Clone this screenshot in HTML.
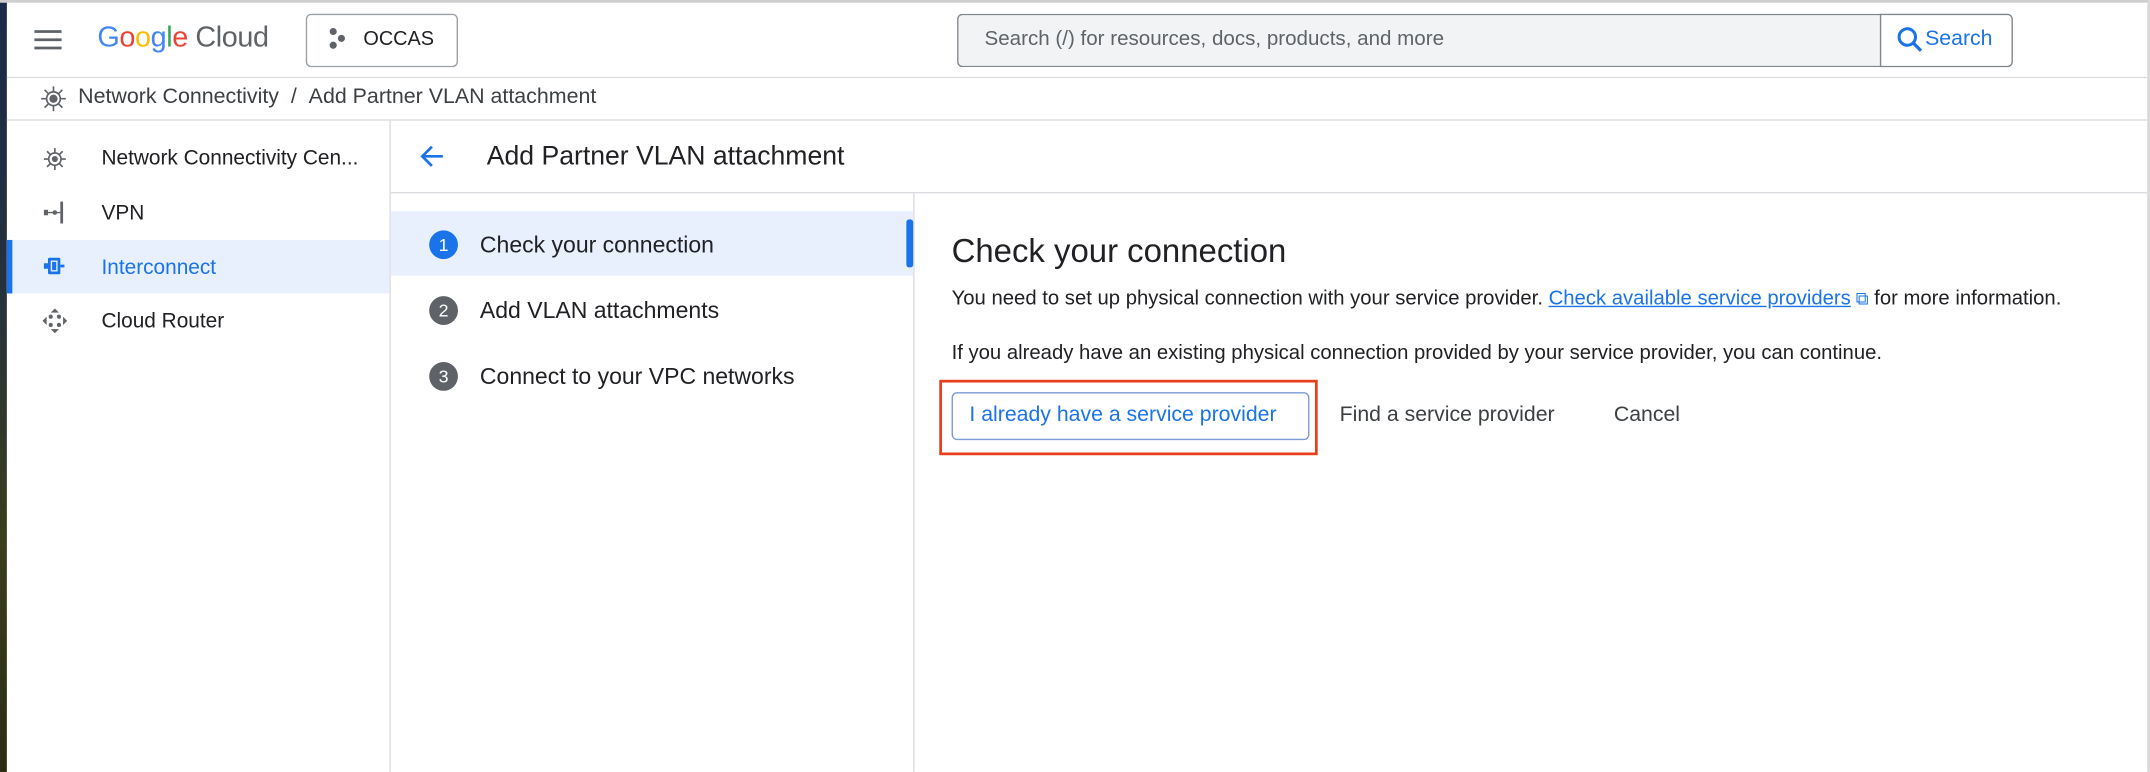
<!DOCTYPE html>
<html><head><meta charset="utf-8"><style>
html,body{margin:0;padding:0;width:2150px;height:772px;overflow:hidden;background:#fff}
#w{position:absolute;left:0;top:0;width:1568px;height:563px;transform:scale(1.37117);transform-origin:0 0;font-family:"Liberation Sans",Arial,sans-serif;color:#202124}
.a{position:absolute}
.t{position:absolute;white-space:nowrap}
</style></head><body><div id="w">
<div class="a" style="left:0;top:0;width:5px;height:563px;background:linear-gradient(#1a2a4a,#27323a 40%,#3a3e1c 70%,#2a2c14)"></div>
<div class="a" style="left:0;top:0;width:1568px;height:2px;background:#cfcfcf"></div>
<div class="a" style="left:1566px;top:0;width:2px;height:563px;background:#d8d8d8"></div>
<!-- header -->
<svg class="a" style="left:25px;top:21px" width="20" height="16"><rect y="1" width="20" height="2" fill="#5f6368"/><rect y="7" width="20" height="2" fill="#5f6368"/><rect y="13" width="20" height="2" fill="#5f6368"/></svg>
<div class="t" style="left:71px;top:16px;font-size:21px;letter-spacing:-0.3px"><span style="color:#4285f4">G</span><span style="color:#ea4335">o</span><span style="color:#fbbc04">o</span><span style="color:#4285f4">g</span><span style="color:#34a853">l</span><span style="color:#ea4335">e</span><span style="color:#5f6368"> Cloud</span></div>
<div class="a" style="left:223px;top:10px;width:109px;height:37px;border:1px solid #9aa0a6;border-radius:4px"></div>
<svg class="a" style="left:239px;top:20px" width="14" height="16"><circle cx="4" cy="3" r="2.6" fill="#5f6368"/><circle cx="10" cy="8" r="2.6" fill="#5f6368"/><circle cx="4" cy="13" r="2.6" fill="#5f6368"/></svg>
<div class="t" style="left:265px;top:21px;font-size:14.5px;color:#202124">OCCAS</div>
<div class="a" style="left:698px;top:10px;width:673px;height:37px;background:#f1f3f4;border:1px solid #80868b;border-right:none;border-radius:4px 0 0 4px"></div>
<div class="a" style="left:1371px;top:10px;width:95px;height:37px;border:1px solid #80868b;border-radius:0 4px 4px 0;background:#fff"></div>
<div class="t" style="left:718px;top:20px;font-size:15px;color:#5f6368">Search (/) for resources, docs, products, and more</div>
<svg class="a" style="left:1383px;top:19px" width="20" height="20"><circle cx="8" cy="8" r="6" fill="none" stroke="#1a73e8" stroke-width="2.2"/><path d="M12.5 12.5 L18 18" stroke="#1a73e8" stroke-width="2.4"/></svg>
<div class="t" style="left:1404px;top:20px;font-size:15.5px;color:#1a73e8">Search</div>
<div class="a" style="left:5px;top:56px;width:1563px;height:1px;background:#dadce0"></div>
<!-- breadcrumb -->
<svg class="a" style="left:29px;top:62px" width="20" height="20"><g stroke="#5f6368" stroke-width="1.2" fill="none"><circle cx="10" cy="10" r="5"/><path d="M10 1v4M10 15v4M1 10h4M15 10h4M3.5 3.5l3 3M13.5 13.5l3 3M16.5 3.5l-3 3M3.5 16.5l3-3"/></g><circle cx="10" cy="10" r="3" fill="#5f6368"/></svg>
<div class="t" style="left:57px;top:62px;font-size:15.6px;color:#3c4043">Network Connectivity&nbsp;&nbsp;/&nbsp;&nbsp;Add Partner VLAN attachment</div>
<div class="a" style="left:5px;top:87px;width:1563px;height:1px;background:#dadce0"></div>
<!-- sidebar -->
<div class="a" style="left:284px;top:88px;width:1px;height:475px;background:#dadce0"></div>
<svg class="a" style="left:31px;top:107px" width="18" height="18"><g stroke="#5f6368" stroke-width="1.2" fill="none"><circle cx="9" cy="9" r="4.5"/><path d="M9 1v3.5M9 13.5v3.5M1 9h3.5M13.5 9h3.5M3.3 3.3l2.5 2.5M12.2 12.2l2.5 2.5M14.7 3.3l-2.5 2.5M3.3 14.7l2.5-2.5"/></g><circle cx="9" cy="9" r="2.2" fill="#5f6368"/></svg>
<div class="t" style="left:74px;top:107px;font-size:15.2px">Network Connectivity Cen...</div>
<svg class="a" style="left:31px;top:146px" width="18" height="18"><g fill="#5f6368"><rect x="1" y="7" width="3" height="4"/><rect x="13" y="1" width="2" height="16"/><path d="M4 8.5h9v1H4z"/><circle cx="9" cy="9" r="1.7"/></g></svg>
<div class="t" style="left:74px;top:147px;font-size:15.2px">VPN</div>
<div class="a" style="left:5px;top:175px;width:279px;height:39px;background:#e8f0fe"></div>
<div class="a" style="left:5px;top:175px;width:4px;height:39px;background:#1a73e8"></div>
<svg class="a" style="left:31px;top:185px" width="18" height="18"><g fill="#1a73e8"><rect x="4" y="3" width="9" height="12" rx="1"/><rect x="1" y="7" width="3" height="4"/><rect x="13" y="8" width="3" height="2"/></g><rect x="6" y="5" width="5" height="8" fill="#e8f0fe"/><rect x="7" y="6" width="3" height="6" fill="#1a73e8"/></svg>
<div class="t" style="left:74px;top:187px;font-size:15.2px;color:#1a73e8">Interconnect</div>
<svg class="a" style="left:31px;top:225px" width="18" height="18"><g fill="#5f6368"><path d="M9 0l3 3H6zM9 18l3-3H6zM0 9l3-3v6zM18 9l-3-3v6z"/><circle cx="6" cy="6" r="1.5"/><circle cx="12" cy="12" r="1.5"/><circle cx="12" cy="6" r="1.5"/><circle cx="6" cy="12" r="1.5"/></g></svg>
<div class="t" style="left:74px;top:226px;font-size:15.2px">Cloud Router</div>
<!-- title row -->
<svg class="a" style="left:305px;top:104px" width="20" height="20"><path d="M18 10H3M10 3L3 10l7 7" stroke="#1a73e8" stroke-width="2" fill="none"/></svg>
<div class="t" style="left:355px;top:103px;font-size:19.4px">Add Partner VLAN attachment</div>
<div class="a" style="left:285px;top:140px;width:1281px;height:1px;background:#dadce0"></div>
<!-- steps -->
<div class="a" style="left:666px;top:141px;width:1px;height:422px;background:#dadce0"></div>
<div class="a" style="left:285px;top:154px;width:381px;height:47px;background:#e8f0fe"></div>
<div class="a" style="left:661px;top:160px;width:5px;height:35px;background:#1a73e8;border-radius:2px"></div>
<div class="a" style="left:313px;top:168px;width:21px;height:21px;border-radius:50%;background:#1a73e8;color:#fff;font-size:13px;text-align:center;line-height:21px">1</div>
<div class="t" style="left:350px;top:169px;font-size:16.8px">Check your connection</div>
<div class="a" style="left:313px;top:216px;width:21px;height:21px;border-radius:50%;background:#5f6368;color:#fff;font-size:13px;text-align:center;line-height:21px">2</div>
<div class="t" style="left:350px;top:217px;font-size:16.8px">Add VLAN attachments</div>
<div class="a" style="left:313px;top:264px;width:21px;height:21px;border-radius:50%;background:#5f6368;color:#fff;font-size:13px;text-align:center;line-height:21px">3</div>
<div class="t" style="left:350px;top:265px;font-size:16.8px">Connect to your VPC networks</div>
<!-- content -->
<div class="t" style="left:694px;top:170px;font-size:24px">Check your connection</div>
<div class="t" style="left:694px;top:210px;font-size:14.8px">You need to set up physical connection with your service provider. <span style="color:#1a73e8;text-decoration:underline">Check available service providers</span><span style="color:#1a73e8;font-size:13px"> &#x29C9;</span> for more information.</div>
<div class="t" style="left:694px;top:250px;font-size:14.8px">If you already have an existing physical connection provided by your service provider, you can continue.</div>
<div class="a" style="left:685px;top:277px;width:272px;height:51px;border:2px solid #e8401c"></div>
<div class="a" style="left:694px;top:286px;width:259px;height:33px;border:1px solid #7b9ad6;border-radius:4px"></div>
<div class="t" style="left:707px;top:294px;font-size:15.5px;color:#1a73e8">I already have a service provider</div>
<div class="t" style="left:977px;top:294px;font-size:15.5px;color:#3c4043">Find a service provider</div>
<div class="t" style="left:1177px;top:294px;font-size:15.5px;color:#3c4043">Cancel</div>
</div></body></html>
